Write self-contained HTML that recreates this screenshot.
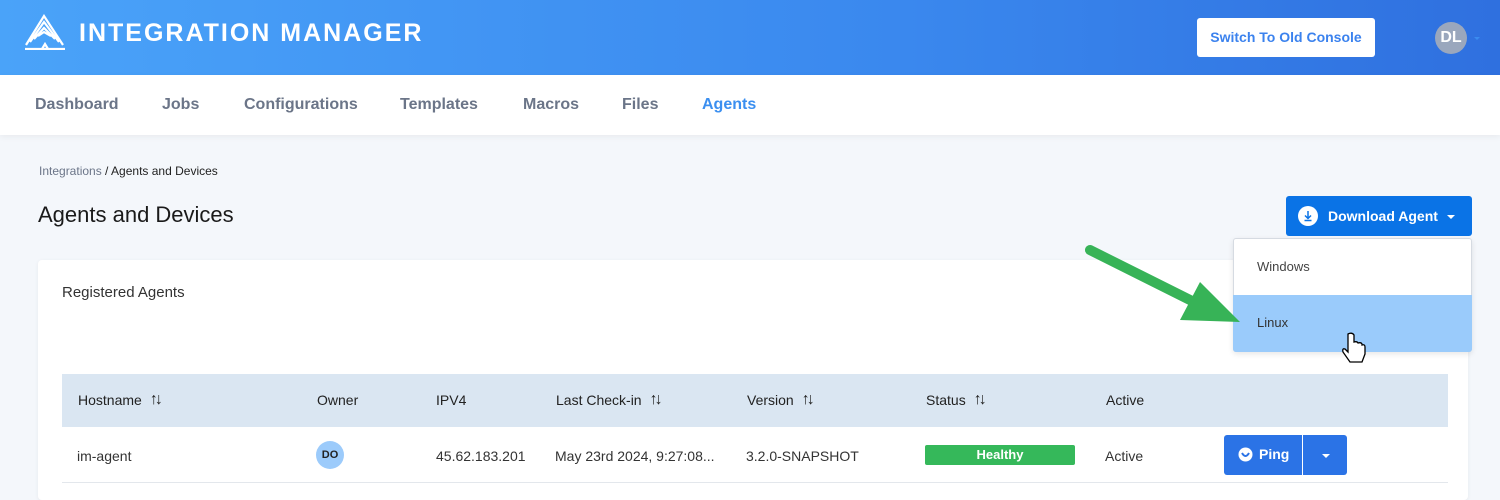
<!DOCTYPE html>
<html><head><meta charset="utf-8"><style>
*{box-sizing:border-box;margin:0;padding:0}
body{width:1500px;height:490px;overflow:hidden;background:#f4f7fb;font-family:"Liberation Sans",sans-serif;position:relative}
.hdr{position:absolute;left:0;top:0;width:1500px;height:75px;background:linear-gradient(90deg,#4aa3f9,#3a88ee 60%,#2f70df)}
.logo{position:absolute;left:79px;top:19px;color:#fff;font-size:25px;font-weight:bold;letter-spacing:2px}
.sw{position:absolute;left:1197px;top:18px;width:178px;height:39px;background:#fff;border-radius:3px;color:#3b82ee;font-size:14px;text-align:center;line-height:39px;font-weight:bold}
.av{position:absolute;left:1435px;top:22px;width:32px;height:32px;border-radius:50%;background:#9aa7bd;color:#fff;font-weight:bold;font-size:16px;text-align:center;line-height:32px}
.car{position:absolute;width:0;height:0;border-left:4px solid transparent;border-right:4px solid transparent;border-top:4px solid}
.nav{position:absolute;top:75px;left:0;width:1500px;height:60px;background:#fff;box-shadow:0 2px 6px rgba(0,0,0,.05)}
.nav span{position:absolute;top:21px;font-size:16px;font-weight:bold;color:#6b7588}
.t{position:absolute;white-space:nowrap}
.card{position:absolute;left:38px;top:260px;width:1430px;height:240px;background:#fff;border-radius:4px;box-shadow:0 1px 4px rgba(0,0,0,.06)}
.th{position:absolute;left:62px;top:374px;width:1386px;height:53px;background:#dae6f2}
.th span{position:absolute;top:17px;font-size:14px;color:#222;line-height:18px;height:18px}
.th b{font-weight:normal;font-size:16px;margin-left:8px;letter-spacing:-3px;line-height:18px;display:inline-block;vertical-align:top}
.row span{position:absolute;top:448px;font-size:14px;color:#333}
</style></head><body>
<div class="hdr">
<svg style="position:absolute;left:24px;top:14px" width="42" height="36" viewBox="0 0 42 36" fill="none" stroke="#fff" stroke-width="2.2"><path d="M1 35H41M2 31L20 2L39 31M6 28L20 8L35 28M10 25L20 14L31 25M14 22L20 18L27 22M18 35L21 30L24 35"/></svg>
<div class="logo">INTEGRATION MANAGER</div>
<div class="sw">Switch To Old Console</div>
<div class="av">DL</div>
<div class="car" style="left:1474px;top:37px;color:#3b8cf0;border-width:3px 3px 0 3px"></div>
</div>
<div class="nav">
<span style="left:35px">Dashboard</span><span style="left:162px">Jobs</span><span style="left:244px">Configurations</span><span style="left:400px">Templates</span><span style="left:523px">Macros</span><span style="left:622px">Files</span><span style="left:702px;color:#3b8ff0">Agents</span>
</div>
<div class="t" style="left:39px;top:164px;font-size:12px;color:#6b7588">Integrations <span style="color:#222">/ Agents and Devices</span></div>
<div class="t" style="left:38px;top:202px;font-size:22px;color:#1a1a1a">Agents and Devices</div>
<div style="position:absolute;left:1286px;top:196px;width:186px;height:40px;background:#0a73e6;border-radius:3px"></div>
<svg style="position:absolute;left:1298px;top:206px" width="20" height="20" viewBox="0 0 20 20"><circle cx="10" cy="10" r="10" fill="#fff"/><path d="M10 5V12M7 9.5L10 12.5L13 9.5M6.5 14.5H13.5" stroke="#0a73e6" stroke-width="1.5" fill="none"/></svg>
<div class="t" style="left:1328px;top:208px;font-size:14px;font-weight:bold;color:#fff">Download Agent</div>
<div class="car" style="left:1447px;top:215px;color:#fff"></div>
<div class="card"></div>
<div class="t" style="left:62px;top:284px;font-size:15px;color:#333">Registered Agents</div>
<div class="th">
<span style="left:16px">Hostname<b>↑↓</b></span><span style="left:255px">Owner</span><span style="left:374px">IPV4</span><span style="left:494px">Last Check-in<b>↑↓</b></span><span style="left:685px">Version<b>↑↓</b></span><span style="left:864px">Status<b>↑↓</b></span><span style="left:1044px">Active</span>
</div>
<div style="position:absolute;left:62px;top:482px;width:1386px;height:1px;background:#e3e7ec"></div>
<div class="row">
<span style="left:77px">im-agent</span><span style="left:436px">45.62.183.201</span><span style="left:555px">May 23rd 2024, 9:27:08...</span><span style="left:746px">3.2.0-SNAPSHOT</span><span style="left:1105px">Active</span>
</div>
<div style="position:absolute;left:316px;top:441px;width:28px;height:28px;border-radius:50%;background:#9ccbfb;font-size:11px;font-weight:bold;text-align:center;line-height:28px;color:#222">DO</div>
<div style="position:absolute;left:925px;top:445px;width:150px;height:20px;background:#35b85a;border-radius:2px;color:#fff;font-weight:bold;font-size:13px;text-align:center;line-height:20px">Healthy</div>
<div style="position:absolute;left:1224px;top:435px;width:123px;height:40px;background:#2b73e6;border-radius:3px"></div>
<div style="position:absolute;left:1302px;top:435px;width:1px;height:40px;background:#fff"></div>
<svg style="position:absolute;left:1238px;top:447px" width="15" height="15" viewBox="0 0 15 15"><circle cx="7.5" cy="7.5" r="7" fill="#fff"/><path d="M4 6Q7.5 12 11 6" stroke="#2b73e6" stroke-width="2" fill="none"/></svg>
<div class="t" style="left:1259px;top:446px;font-size:14px;font-weight:bold;color:#fff">Ping</div>
<div class="car" style="left:1322px;top:454px;color:#fff"></div>
<div style="position:absolute;left:1233px;top:238px;width:239px;height:114px;background:#fff;border:1px solid #d6dbe2;border-radius:3px;box-shadow:0 2px 6px rgba(0,0,0,.1)"></div>
<div style="position:absolute;left:1233px;top:295px;width:239px;height:57px;background:#9acbfb;border-radius:0 0 3px 3px"></div>
<div class="t" style="left:1257px;top:259px;font-size:13px;color:#444">Windows</div>
<div class="t" style="left:1257px;top:315px;font-size:13px;color:#333">Linux</div>
<svg style="position:absolute;left:1080px;top:240px" width="170" height="100" viewBox="0 0 170 100"><path d="M10 10L130 70" stroke="#37b357" stroke-width="10" stroke-linecap="round"/><path d="M120 42L160 82L100 80Z" fill="#37b357"/></svg>
<svg style="position:absolute;left:1340px;top:332px" width="28" height="34" viewBox="0 0 28 34"><path d="M8 2V20L5 17Q2 16 3 20L10 30H22L25 22V15Q25 12 22 13V12Q21 10 18 11Q17 9 14 10V3Q12 0 8 2Z" fill="#fff" stroke="#000" stroke-width="1.3"/></svg>
</body></html>
